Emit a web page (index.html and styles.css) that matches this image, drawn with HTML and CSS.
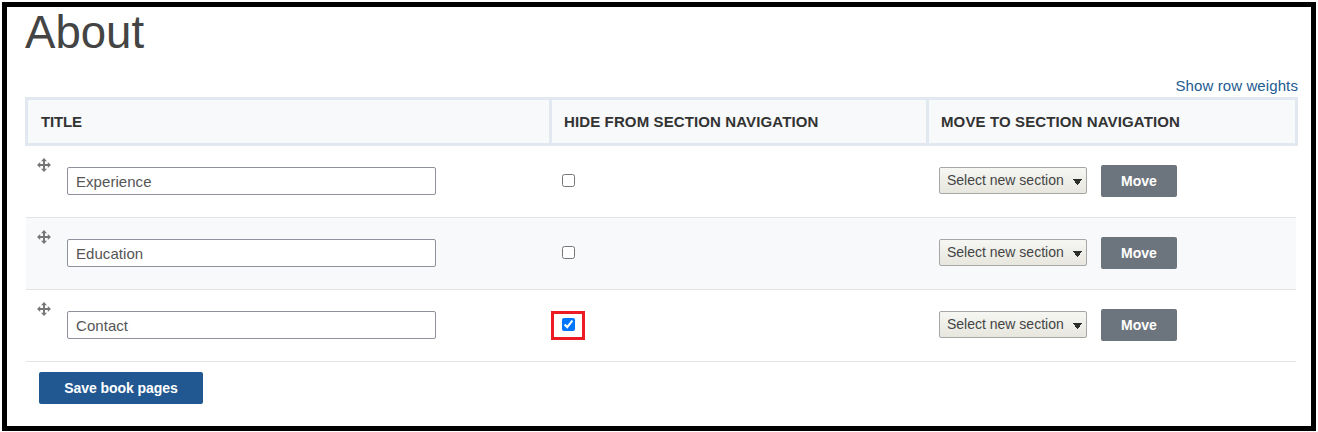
FILE: index.html
```html
<!DOCTYPE html>
<html lang="en">
<head>
  <meta charset="UTF-8">
  <title>About</title>
  <link rel="stylesheet" href="styles.css">
</head>
<body>
  <svg class="sprite" width="0" height="0">
    <symbol id="move" viewBox="0 0 14 14">
      <path d="M6 3h2v3h3v2H8v3H6V8H3V6h3z"/>
      <path d="M7 0l3 3.2H4zM7 14l3-3.2H4zM0 7l3.2-3v6zM14 7l-3.2-3v6z"/>
    </symbol>
  </svg>
  <main class="page">
    <h1 class="page-title">About</h1>
    <div class="weights"><a href="#">Show row weights</a></div>
    <form>
      <table class="book-table">
        <thead>
          <tr>
            <th>Title</th>
            <th>Hide from section navigation</th>
            <th>Move to section navigation</th>
          </tr>
        </thead>
        <tbody>
          <tr>
            <td class="title-cell">
              <a class="handle" href="#" title="Drag to re-order"><svg><use href="#move"/></svg></a>
              <input class="text" type="text" value="Experience">
            </td>
            <td class="hide-cell"><span class="check"><input type="checkbox"></span></td>
            <td class="move-cell">
              <select class="section"><option>Select new section</option></select>
              <button class="btn" type="button">Move</button>
            </td>
          </tr>
          <tr>
            <td class="title-cell">
              <a class="handle" href="#" title="Drag to re-order"><svg><use href="#move"/></svg></a>
              <input class="text" type="text" value="Education">
            </td>
            <td class="hide-cell"><span class="check"><input type="checkbox"></span></td>
            <td class="move-cell">
              <select class="section"><option>Select new section</option></select>
              <button class="btn" type="button">Move</button>
            </td>
          </tr>
          <tr>
            <td class="title-cell">
              <a class="handle" href="#" title="Drag to re-order"><svg><use href="#move"/></svg></a>
              <input class="text" type="text" value="Contact">
            </td>
            <td class="hide-cell"><span class="check marked"><input type="checkbox" checked></span></td>
            <td class="move-cell">
              <select class="section"><option>Select new section</option></select>
              <button class="btn" type="button">Move</button>
            </td>
          </tr>
        </tbody>
      </table>
      <button class="btn save" type="button">Save book pages</button>
    </form>
  </main>
</body>
</html>
```

FILE: styles.css
```css
* {
  box-sizing: border-box;
}

body {
  margin: 0;
  background: #fff;
  color: #444;
  font-family: "Liberation Sans", Arial, sans-serif;
  font-size: 15px;
}

.sprite {
  display: block;
}

.page {
  height: 429px;
  margin: 2px 2px 1px;
  padding: 0 13px 0 18px;
  border: 5px solid #000;
}

.page-title {
  margin: 0;
  height: 69px;
  font-size: 45.6px;
  font-weight: normal;
  line-height: 51px;
}

.weights {
  height: 21px;
  line-height: 20px;
  text-align: right;
}

.weights a {
  color: #225a92;
  text-decoration: none;
  letter-spacing: 0.1px;
}

.book-table,
.book-table thead,
.book-table tbody {
  display: block;
}

.book-table tr {
  display: grid;
}

.book-table thead tr {
  grid-template-columns: 521px 374px 366px;
  gap: 3px;
  padding: 3px;
  background: #e1e8f0;
}

.book-table th {
  height: 43px;
  padding: 0 12px;
  background: #f8f9fb;
  color: #333;
  font-size: 15px;
  line-height: 43px;
  letter-spacing: 0.12px;
  text-align: left;
  text-transform: uppercase;
}

.book-table th:first-child {
  padding-left: 13px;
  letter-spacing: -0.15px;
}

.book-table tbody tr {
  grid-template-columns: 525px 377px 368px;
  height: 72px;
  margin: 0 2px 0 1px;
  border-bottom: 1px solid #e2e4e6;
}

.book-table tbody tr:nth-child(even) {
  background: #f8f9fb;
}

.book-table td {
  display: flex;
  align-items: flex-start;
  padding: 0;
}

.handle {
  margin: 12px 16px 0 11px;
  height: 14px;
}

.handle svg {
  display: block;
  width: 14px;
  height: 14px;
  fill: #777;
}

.text {
  width: 369px;
  height: 28px;
  margin-top: 21px;
  padding: 0 8px;
  border: 1px solid #8e929c;
  border-radius: 2px;
  background: #fff;
  color: #555;
  font: 15px "Liberation Sans", Arial, sans-serif;
  letter-spacing: 0.05px;
}

.check {
  width: 34px;
  height: 29px;
  margin-top: 21px;
  padding: 4px 8px;
  border: 3px solid transparent;
}

.check input {
  display: block;
  width: 13px;
  height: 13px;
  margin: 0;
}

.marked {
  border-color: #ed1c24;
}

.section {
  appearance: none;
  width: 148px;
  height: 27px;
  margin: 21px 14px 0 11px;
  padding: 0 7px 1px;
  border: 1px solid #a6a6a6;
  border-radius: 2px;
  /* arrow over the grey gradient */
  background:
    conic-gradient(from -40deg at 50% 100%, #2b2f2b 80deg, transparent 0) 133px 11px / 9px 6px no-repeat,
    linear-gradient(#f6f6f3, #e7e7df);
  color: #444;
  font: 14px "Liberation Sans", Arial, sans-serif;
}

.btn {
  width: 76px;
  height: 32px;
  margin-top: 19px;
  padding: 0;
  border: 0;
  border-radius: 2px;
  background: #6c757d;
  color: #fff;
  font: bold 14px "Liberation Sans", Arial, sans-serif;
}

.save {
  display: block;
  width: 164px;
  margin: 10px 0 0 14px;
  background: #225891;
  letter-spacing: -0.07px;
}
```
